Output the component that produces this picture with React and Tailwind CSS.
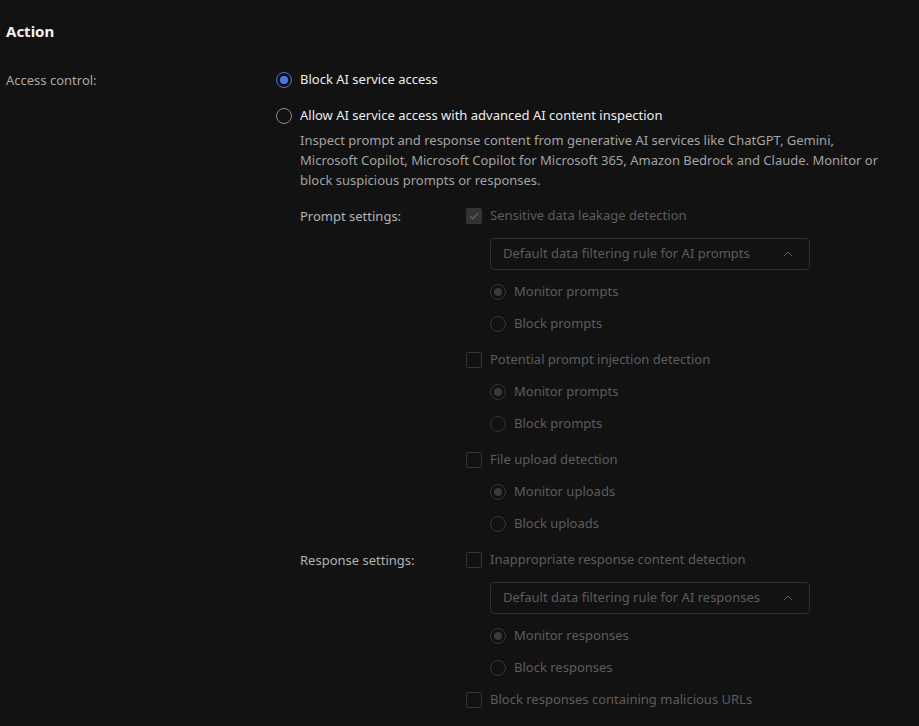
import { ChevronUp } from 'lucide-react'

function Radio({ checked, disabled, label }) {
  const ring = disabled ? 'border-[#353535]' : checked ? 'border-[#4a78e8]' : 'border-[#8c8c8c]'
  return (
    <div className="flex items-center h-5 gap-2">
      <span className={`w-4 h-4 rounded-full border-[1.5px] ${ring} flex items-center justify-center`}>
        {checked && (
          <span className={`w-2 h-2 rounded-full ${disabled ? 'bg-[#3a3a3a]' : 'bg-[#4a78e8]'}`} />
        )}
      </span>
      <span className={disabled ? 'text-[#5c5c5c]' : 'text-[#ececec]'}>{label}</span>
    </div>
  )
}

function Check({ checked, label }) {
  return (
    <div className="flex items-center h-5 gap-2">
      <span
        className={`w-4 h-4 rounded-[2px] border border-[#353535] flex items-center justify-center ${
          checked ? 'bg-[#333333]' : ''
        }`}
      >
        {checked && (
          <svg width="12" height="12" viewBox="0 0 12 12" fill="none">
            <path d="M2 6.3 L4.8 9 L10.2 3" stroke="#5e5e5e" strokeWidth="1.3" />
          </svg>
        )}
      </span>
      <span className="text-[#5c5c5c]">{label}</span>
    </div>
  )
}

function Dropdown({ label }) {
  return (
    <div className="w-[320px] h-8 border border-[#2f2f2f] rounded-[4px] flex items-center justify-between pl-[12px] pr-[13px] text-[#5c5c5c]">
      <span>{label}</span>
      <ChevronUp size={16} strokeWidth={1.5} className="text-[#5c5c5c]" />
    </div>
  )
}

export default function App() {
  return (
    <div
      className="min-h-screen bg-[#121212] pl-[6px] pt-[20px] text-[13px]"
      style={{ fontFamily: '"Noto Sans", "Open Sans", sans-serif' }}
    >
      <h2 className="h-[22px] leading-[22px] text-[15px] font-bold text-[#f2f2f2]">Action</h2>

      <div className="mt-[28px] grid grid-cols-[270px_1fr]">
        <div className="h-5 leading-5 text-[#a8a8a8]">Access control:</div>
        <div className="flex flex-col">
          <Radio checked label="Block AI service access" />
          <div className="mt-4">
            <Radio label="Allow AI service access with advanced AI content inspection" />
          </div>
          <div className="pl-6">
            <p className="mt-1 leading-5 text-[#a3a3a3] max-w-[593px]">
              Inspect prompt and response content from generative AI services like ChatGPT, Gemini,
              Microsoft Copilot, Microsoft Copilot for Microsoft 365, Amazon Bedrock and Claude. Monitor or
              block suspicious prompts or responses.
            </p>

            <div className="mt-4 grid grid-cols-[166px_1fr]">
              <div className="h-5 leading-5 text-[#b3b3b3]">Prompt settings:</div>
              <div className="flex flex-col">
                <Check checked label="Sensitive data leakage detection" />
                <div className="pl-6 flex flex-col gap-3 mt-3">
                  <Dropdown label="Default data filtering rule for AI prompts" />
                  <Radio checked disabled label="Monitor prompts" />
                  <Radio disabled label="Block prompts" />
                </div>
                <div className="mt-4">
                  <Check label="Potential prompt injection detection" />
                </div>
                <div className="pl-6 flex flex-col gap-3 mt-3">
                  <Radio checked disabled label="Monitor prompts" />
                  <Radio disabled label="Block prompts" />
                </div>
                <div className="mt-4">
                  <Check label="File upload detection" />
                </div>
                <div className="pl-6 flex flex-col gap-3 mt-3">
                  <Radio checked disabled label="Monitor uploads" />
                  <Radio disabled label="Block uploads" />
                </div>
              </div>
            </div>

            <div className="mt-4 grid grid-cols-[166px_1fr]">
              <div className="h-5 leading-5 text-[#b3b3b3]">Response settings:</div>
              <div className="flex flex-col">
                <Check label="Inappropriate response content detection" />
                <div className="pl-6 flex flex-col gap-3 mt-3">
                  <Dropdown label="Default data filtering rule for AI responses" />
                  <Radio checked disabled label="Monitor responses" />
                  <Radio disabled label="Block responses" />
                </div>
                <div className="mt-3">
                  <Check label="Block responses containing malicious URLs" />
                </div>
              </div>
            </div>
          </div>
        </div>
      </div>
    </div>
  )
}
